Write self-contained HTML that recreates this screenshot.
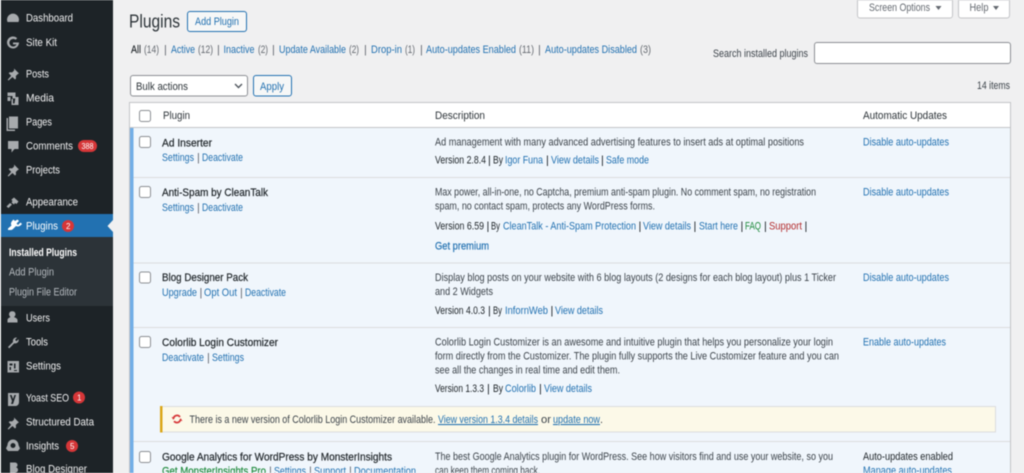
<!DOCTYPE html>
<html lang="en"><head><meta charset="utf-8"><title>Plugins</title>
<style>
html,body{margin:0;padding:0;width:1024px;height:473px;overflow:hidden;background:#f0f0f1}
svg{display:block;filter:blur(.4px)}
text{font-family:"Liberation Sans",sans-serif;font-size:10.8px;fill:#3c434a;white-space:pre;transform:translateY(-.5px)}
.m text{fill:#f0f0f1}
.s text{fill:#b4b9be}
.l{fill:#2271b1}
.g{fill:#646970}
.n{fill:#1d2327;stroke:#1d2327;stroke-width:.2px}
.k{fill:#1d2327}
.h{fill:#2c3338}
.i{fill:#a7aaad}
.c{fill:#fff;stroke:#8c8f94;stroke-width:1}
</style></head><body>
<svg width="1024" height="473" viewBox="0 0 1024 473" xmlns="http://www.w3.org/2000/svg">
<rect width="1024" height="473" fill="#f0f0f1"/>
<!-- sidebar -->
<rect x="1" width="112" height="473" fill="#1d2327"/>
<rect x="1" y="214" width="112" height="23" fill="#2271b1"/>
<rect x="1" y="237" width="112" height="69" fill="#2c3338"/>
<path d="M113 220l-5.500 6 5.500 6z" fill="#f0f0f1"/>
<g class="m">
<text x="26" y="22" textLength="47" lengthAdjust="spacingAndGlyphs">Dashboard</text>
<text x="26" y="46.500" textLength="31" lengthAdjust="spacingAndGlyphs">Site Kit</text>
<text x="26" y="78" textLength="23" lengthAdjust="spacingAndGlyphs">Posts</text>
<text x="26" y="102" textLength="28" lengthAdjust="spacingAndGlyphs">Media</text>
<text x="26" y="126" textLength="26" lengthAdjust="spacingAndGlyphs">Pages</text>
<text x="26" y="150" textLength="47" lengthAdjust="spacingAndGlyphs">Comments</text>
<text x="26" y="174" textLength="34" lengthAdjust="spacingAndGlyphs">Projects</text>
<text x="26" y="206" textLength="52" lengthAdjust="spacingAndGlyphs">Appearance</text>
<text x="26" y="230" textLength="32" lengthAdjust="spacingAndGlyphs" style="fill:#fff">Plugins</text>
<text x="26" y="322" textLength="24" lengthAdjust="spacingAndGlyphs">Users</text>
<text x="26" y="346" textLength="22" lengthAdjust="spacingAndGlyphs">Tools</text>
<text x="26" y="370" textLength="35" lengthAdjust="spacingAndGlyphs">Settings</text>
<text x="26" y="402" textLength="43" lengthAdjust="spacingAndGlyphs">Yoast SEO</text>
<text x="26" y="426" textLength="68" lengthAdjust="spacingAndGlyphs">Structured Data</text>
<text x="26" y="450" textLength="33" lengthAdjust="spacingAndGlyphs">Insights</text>
<text x="26" y="473" textLength="61" lengthAdjust="spacingAndGlyphs">Blog Designer</text>
</g>
<g class="s">
<text x="9" y="256.500" textLength="68" lengthAdjust="spacingAndGlyphs" style="fill:#fff;font-weight:bold">Installed Plugins</text>
<text x="9" y="276" textLength="45" lengthAdjust="spacingAndGlyphs">Add Plugin</text>
<text x="9" y="296" textLength="68" lengthAdjust="spacingAndGlyphs">Plugin File Editor</text>
</g>
<!-- sidebar icons -->
<g class="i">
<path d="M7.500 22a6 6 0 1 1 11 0z"/>
<path d="M13 42.500h6a6 6 0 1 1-1.800-4.300l-1.600 1.600a3.800 3.800 0 1 0 1 4.600H13z"/>
<path d="M14 68.500l5 5-1.200 .5-2 2 .2 2.500-1 1-2.500-2.500-4 3.500-.8-.8 3.500-4-2.500-2.500 1-1 2.500.2 2-2z"/>
<path d="M7.500 92.500h8v6h-3v-2.500h-5zM15.500 97h3v8h-7v-6h1.500v4.500h1.500zM7.500 97h3v4h-3z"/>
<path d="M9 116.500h9v12h-9z"/><path d="M8 118v11.500h7v1.500h-8.500v-13z"/>
<path d="M8 141h10.500v8h-4l-3 3.500v-3.500H8z"/>
<path d="M14 164.500l5 5-1.200 .5-2 2 .2 2.500-1 1-2.500-2.500-4 3.500-.8-.8 3.500-4-2.500-2.500 1-1 2.500.2 2-2z"/>
<path d="M14 197.500l4.500 4-2 2.500-1.500-1-1 1.500-2.500-2 1-1.500-1.200-1.200zM10 203l2 1.500-3.500 3.500-2-1.500z"/>
<path d="M7.500 322.500v-2.500c0-1.500 2-2.500 3-3-1-.8-1.500-1.800-1.500-3a3.300 3.300 0 0 1 6.500 0c0 1.200-.5 2.200-1.500 3 1 .5 3.500 1.500 3.500 3v2.500z"/>
<path d="M8 347l5-5c-.5-2 .5-4 3-4.500l1 .2-2 2 1.500 1.500 2-2 .2 1c-.3 2.500-2.500 3.500-4.500 3l-5 5.200z"/>
<path fill-rule="evenodd" d="M7.500 361h11.500v11.500H7.500zM9.500 363.500v2h3v-2zM14 363.500v5h1.500v-5zM9.500 367v3h1.500v-3zM14 370v1h3v-1z"/>
<path d="M8 393h11v9c0 2-1 3.500-3 4H8zM9.800 395l2.200 6-1 3h2l3-9h-1.600l-1.400 4-1.400-4z" fill-rule="evenodd"/>
<path d="M14 417.500l5 5-1.200 .5-2 2 .2 2.500-1 1-2.500-2.500-4 3.500-.8-.8 3.500-4-2.500-2.500 1-1 2.500.2 2-2z"/>
<path fill-rule="evenodd" d="M13 439.500c3.500 0 5.500 3 5.500 5.500l1.500 3.500-2 2.500H8l-2-2.500L7.500 445c0-2.500 2-5.500 5.500-5.500zM13 443a2.500 2.500 0 1 0 .01 0z"/>
<path d="M10 462.500h4.500c2 0 3 1 3 2.500 0 1-.5 1.800-1.500 2.200 1.300 .4 2 1.300 2 2.600 0 1.700-1.200 3.200-3.500 3.200H10z"/>
</g>
<path fill="#fff" d="M17.500 219.500l1.500 1.500-2.500 2.500 1.500 1.500 2.500-2.500 1.500 1.500-1 1c-1.500 1.500-3.500 2-5 1l-2.500 2.500c-.8 .8-1.500 1.500-2.500 1.500H8v-1.500l3.500-3c-1-1.500-.5-3.500 1-5l1-1 1.500 1.500z"/>
<!-- badges -->
<rect x="78" y="140" width="19" height="12" rx="6" fill="#d63638"/>
<text x="81.500" y="149.500" textLength="12" lengthAdjust="spacingAndGlyphs" style="font-size:8px;fill:#fff">388</text>
<circle cx="68" cy="226" r="6" fill="#d63638"/>
<text x="66" y="229.500" style="font-size:8px;fill:#fff">2</text>
<circle cx="79" cy="397.500" r="6" fill="#d63638"/>
<text x="77" y="401" style="font-size:8px;fill:#fff">1</text>
<circle cx="72" cy="446" r="6" fill="#d63638"/>
<text x="70" y="449.500" style="font-size:8px;fill:#fff">5</text>

<!-- header -->
<text x="129" y="28" textLength="51" lengthAdjust="spacingAndGlyphs" class="k" style="font-size:18px;fill:#2c3338">Plugins</text>
<rect x="187.500" y="11.500" width="59" height="20" rx="2.500" fill="#f6f7f7" stroke="#2271b1"/>
<text x="195" y="25.500" textLength="44" lengthAdjust="spacingAndGlyphs" class="l">Add Plugin</text>

<path d="M857.500 0v15.500a2.500 2.500 0 0 0 2.500 2.500h90a2.500 2.500 0 0 0 2.500-2.500V0z" fill="#fff" stroke="#c3c4c7"/>
<text x="869" y="11.500" textLength="61" lengthAdjust="spacingAndGlyphs" class="g">Screen Options</text>
<path d="M935.500 6h6l-3 4z" fill="#646970"/>
<path d="M958.500 0v15.500a2.500 2.500 0 0 0 2.500 2.500h46a2.500 2.500 0 0 0 2.500-2.500V0z" fill="#fff" stroke="#c3c4c7"/>
<text x="969.500" y="11.500" textLength="19" lengthAdjust="spacingAndGlyphs" class="g">Help</text>
<path d="M993 6h6l-3 4z" fill="#646970"/>

<!-- filters -->
<text x="131" y="53.500" textLength="10" lengthAdjust="spacingAndGlyphs" class="n">All</text>
<text x="144" y="53.500" textLength="15" lengthAdjust="spacingAndGlyphs" class="g">(14)</text>
<text x="164" y="53.500" class="g">|</text>
<text x="171" y="53.500" textLength="24" lengthAdjust="spacingAndGlyphs" class="l">Active</text>
<text x="198" y="53.500" textLength="15" lengthAdjust="spacingAndGlyphs" class="g">(12)</text>
<text x="217" y="53.500" class="g">|</text>
<text x="223.500" y="53.500" textLength="31" lengthAdjust="spacingAndGlyphs" class="l">Inactive</text>
<text x="258" y="53.500" textLength="10" lengthAdjust="spacingAndGlyphs" class="g">(2)</text>
<text x="272" y="53.500" class="g">|</text>
<text x="279" y="53.500" textLength="67" lengthAdjust="spacingAndGlyphs" class="l">Update Available</text>
<text x="349" y="53.500" textLength="10" lengthAdjust="spacingAndGlyphs" class="g">(2)</text>
<text x="364" y="53.500" class="g">|</text>
<text x="371" y="53.500" textLength="31" lengthAdjust="spacingAndGlyphs" class="l">Drop-in</text>
<text x="405" y="53.500" textLength="10" lengthAdjust="spacingAndGlyphs" class="g">(1)</text>
<text x="420" y="53.500" class="g">|</text>
<text x="426" y="53.500" textLength="90" lengthAdjust="spacingAndGlyphs" class="l">Auto-updates Enabled</text>
<text x="519" y="53.500" textLength="15" lengthAdjust="spacingAndGlyphs" class="g">(11)</text>
<text x="538" y="53.500" class="g">|</text>
<text x="545" y="53.500" textLength="92" lengthAdjust="spacingAndGlyphs" class="l">Auto-updates Disabled</text>
<text x="640" y="53.500" textLength="11" lengthAdjust="spacingAndGlyphs" class="g">(3)</text>

<text x="713" y="57.500" textLength="95" lengthAdjust="spacingAndGlyphs">Search installed plugins</text>
<rect x="814.500" y="42.500" width="196" height="21" rx="2.500" fill="#fff" stroke="#8c8f94"/>

<rect x="130.500" y="75.500" width="117" height="20.500" rx="2.500" fill="#fff" stroke="#8c8f94"/>
<text x="136" y="90.500" textLength="52" lengthAdjust="spacingAndGlyphs" class="h">Bulk actions</text>
<path d="M235 84l3.500 3.500 3.500-3.500" fill="none" stroke="#50575e" stroke-width="1.400"/>
<rect x="253.500" y="75.500" width="38" height="20.500" rx="2.500" fill="#f6f7f7" stroke="#2271b1"/>
<text x="260" y="90.500" textLength="24" lengthAdjust="spacingAndGlyphs" class="l">Apply</text>
<text x="977" y="89.500" textLength="33" lengthAdjust="spacingAndGlyphs">14 items</text>

<!-- table -->
<rect x="129.500" y="102.500" width="881" height="380" fill="#f0f6fc" stroke="#c3c4c7"/>
<rect x="130" y="103" width="880" height="24" fill="#fff"/>
<rect x="130" y="127" width="880" height="1" fill="#c3c4c7"/>
<rect x="130" y="128" width="3.500" height="345" fill="#72aee6"/>
<rect x="133.500" y="177" width="876.500" height="1" fill="#dcdcde"/>
<rect x="133.500" y="262.500" width="876.500" height="1" fill="#dcdcde"/>
<rect x="133.500" y="327" width="876.500" height="1" fill="#dcdcde"/>
<rect x="133.500" y="441" width="876.500" height="1" fill="#dcdcde"/>

<rect class="c" x="139.500" y="110.500" width="11" height="11" rx="2"/>
<text x="163" y="119.500" textLength="27" lengthAdjust="spacingAndGlyphs" class="h">Plugin</text>
<text x="435" y="119.500" textLength="50" lengthAdjust="spacingAndGlyphs" class="h">Description</text>
<text x="863" y="119.500" textLength="84" lengthAdjust="spacingAndGlyphs" class="h">Automatic Updates</text>

<!-- row 1 -->
<rect class="c" x="139.500" y="136.500" width="11" height="11" rx="2"/>
<text x="162" y="147" textLength="50" lengthAdjust="spacingAndGlyphs" class="n">Ad Inserter</text>
<text x="162" y="161.500" textLength="32" lengthAdjust="spacingAndGlyphs" class="l">Settings</text>
<text x="197" y="161.500" class="g">|</text>
<text x="202" y="161.500" textLength="41" lengthAdjust="spacingAndGlyphs" class="l">Deactivate</text>
<text x="435" y="146" textLength="369" lengthAdjust="spacingAndGlyphs">Ad management with many advanced advertising features to insert ads at optimal positions</text>
<text x="435" y="164" textLength="51" lengthAdjust="spacingAndGlyphs" class="k">Version 2.8.4</text>
<text x="488" y="164" class="k">|</text>
<text x="493" y="164" textLength="10" lengthAdjust="spacingAndGlyphs" class="k">By</text>
<text x="505" y="164" textLength="38" lengthAdjust="spacingAndGlyphs" class="l">Igor Funa</text>
<text x="546" y="164" class="k">|</text>
<text x="551" y="164" textLength="48" lengthAdjust="spacingAndGlyphs" class="l">View details</text>
<text x="601" y="164" class="k">|</text>
<text x="606" y="164" textLength="43" lengthAdjust="spacingAndGlyphs" class="l">Safe mode</text>
<text x="863" y="146" textLength="86" lengthAdjust="spacingAndGlyphs" class="l">Disable auto-updates</text>

<!-- row 2 -->
<rect class="c" x="139.500" y="186.500" width="11" height="11" rx="2"/>
<text x="162" y="196.500" textLength="106" lengthAdjust="spacingAndGlyphs" class="n">Anti-Spam by CleanTalk</text>
<text x="162" y="211.500" textLength="32" lengthAdjust="spacingAndGlyphs" class="l">Settings</text>
<text x="197" y="211.500" class="g">|</text>
<text x="202" y="211.500" textLength="41" lengthAdjust="spacingAndGlyphs" class="l">Deactivate</text>
<text x="435" y="196" textLength="381" lengthAdjust="spacingAndGlyphs">Max power, all-in-one, no Captcha, premium anti-spam plugin. No comment spam, no registration</text>
<text x="435" y="210" textLength="220" lengthAdjust="spacingAndGlyphs">spam, no contact spam, protects any WordPress forms.</text>
<text x="435" y="230" textLength="49" lengthAdjust="spacingAndGlyphs" class="k">Version 6.59</text>
<text x="486.500" y="230" class="k">|</text>
<text x="491" y="230" textLength="9" lengthAdjust="spacingAndGlyphs" class="k">By</text>
<text x="503" y="230" textLength="133" lengthAdjust="spacingAndGlyphs" class="l">CleanTalk - Anti-Spam Protection</text>
<text x="638.500" y="230" class="k">|</text>
<text x="643" y="230" textLength="48" lengthAdjust="spacingAndGlyphs" class="l">View details</text>
<text x="693.500" y="230" class="k">|</text>
<text x="699" y="230" textLength="39" lengthAdjust="spacingAndGlyphs" class="l">Start here</text>
<text x="740.500" y="230" class="k">|</text>
<text x="745" y="230" textLength="16" lengthAdjust="spacingAndGlyphs" style="fill:#1e8a3c">FAQ</text>
<text x="764" y="230" class="k">|</text>
<text x="769" y="230" textLength="33" lengthAdjust="spacingAndGlyphs" style="fill:#b32d2e">Support</text>
<text x="804.500" y="230" class="k">|</text>
<text x="435" y="250" textLength="54" lengthAdjust="spacingAndGlyphs" class="l" style="stroke:#2271b1;stroke-width:.2px">Get premium</text>
<text x="863" y="196" textLength="86" lengthAdjust="spacingAndGlyphs" class="l">Disable auto-updates</text>

<!-- row 3 -->
<rect class="c" x="139.500" y="272" width="11" height="11" rx="2"/>
<text x="162" y="281.500" textLength="86" lengthAdjust="spacingAndGlyphs" class="n">Blog Designer Pack</text>
<text x="162" y="296.500" textLength="35" lengthAdjust="spacingAndGlyphs" class="l">Upgrade</text>
<text x="199.500" y="296.500" class="g">|</text>
<text x="204" y="296.500" textLength="33" lengthAdjust="spacingAndGlyphs" class="l">Opt Out</text>
<text x="240" y="296.500" class="g">|</text>
<text x="245" y="296.500" textLength="41" lengthAdjust="spacingAndGlyphs" class="l">Deactivate</text>
<text x="435" y="281.500" textLength="401" lengthAdjust="spacingAndGlyphs">Display blog posts on your website with 6 blog layouts (2 designs for each blog layout) plus 1 Ticker</text>
<text x="435" y="295.500" textLength="58" lengthAdjust="spacingAndGlyphs">and 2 Widgets</text>
<text x="435" y="314.500" textLength="50" lengthAdjust="spacingAndGlyphs" class="k">Version 4.0.3</text>
<text x="488" y="314.500" class="k">|</text>
<text x="493" y="314.500" textLength="9" lengthAdjust="spacingAndGlyphs" class="k">By</text>
<text x="505" y="314.500" textLength="43" lengthAdjust="spacingAndGlyphs" class="l">InfornWeb</text>
<text x="550.500" y="314.500" class="k">|</text>
<text x="555" y="314.500" textLength="48" lengthAdjust="spacingAndGlyphs" class="l">View details</text>
<text x="863" y="281.500" textLength="86" lengthAdjust="spacingAndGlyphs" class="l">Disable auto-updates</text>

<!-- row 4 -->
<rect class="c" x="139.500" y="336.500" width="11" height="11" rx="2"/>
<text x="162" y="346.500" textLength="116" lengthAdjust="spacingAndGlyphs" class="n">Colorlib Login Customizer</text>
<text x="162" y="361.500" textLength="42" lengthAdjust="spacingAndGlyphs" class="l">Deactivate</text>
<text x="207" y="361.500" class="g">|</text>
<text x="212" y="361.500" textLength="32" lengthAdjust="spacingAndGlyphs" class="l">Settings</text>
<text x="435" y="346" textLength="398" lengthAdjust="spacingAndGlyphs">Colorlib Login Customizer is an awesome and intuitive plugin that helps you personalize your login</text>
<text x="435" y="360" textLength="404" lengthAdjust="spacingAndGlyphs">form directly from the Customizer. The plugin fully supports the Live Customizer feature and you can</text>
<text x="435" y="374" textLength="185" lengthAdjust="spacingAndGlyphs">see all the changes in real time and edit them.</text>
<text x="435" y="392.500" textLength="49" lengthAdjust="spacingAndGlyphs" class="k">Version 1.3.3</text>
<text x="487" y="392.500" class="k">|</text>
<text x="493" y="392.500" textLength="10" lengthAdjust="spacingAndGlyphs" class="k">By</text>
<text x="505" y="392.500" textLength="31" lengthAdjust="spacingAndGlyphs" class="l">Colorlib</text>
<text x="539" y="392.500" class="k">|</text>
<text x="544" y="392.500" textLength="48" lengthAdjust="spacingAndGlyphs" class="l">View details</text>
<text x="863" y="346" textLength="83" lengthAdjust="spacingAndGlyphs" class="l">Enable auto-updates</text>

<!-- notice -->
<rect x="160.500" y="406.500" width="835" height="25.500" fill="#fcf9e8" stroke="#dcdcde"/>
<rect x="160" y="406" width="2.500" height="26.500" fill="#dba617"/>
<circle cx="177" cy="419" r="3.600" fill="none" stroke="#d63638" stroke-width="1.800" stroke-dasharray="9 2.300"/>
<path d="M171.500 417l2.500 .5-.5 2.500zM182.500 421l-2.500-.5.5-2.500z" fill="#d63638"/>
<text x="189.500" y="423.500" textLength="246" lengthAdjust="spacingAndGlyphs">There is a new version of Colorlib Login Customizer available.</text>
<text x="438" y="423.500" textLength="100" lengthAdjust="spacingAndGlyphs" class="l" text-decoration="underline">View version 1.3.4 details</text>
<text x="541" y="423.500" textLength="10" lengthAdjust="spacingAndGlyphs">or</text>
<text x="553" y="423.500" textLength="47" lengthAdjust="spacingAndGlyphs" class="l" text-decoration="underline">update now</text>
<text x="600" y="423.500">.</text>

<!-- row 5 -->
<rect class="c" x="139.500" y="451.500" width="11" height="11" rx="2"/>
<text x="162" y="461" textLength="230" lengthAdjust="spacingAndGlyphs" class="n">Google Analytics for WordPress by MonsterInsights</text>
<text x="162" y="475" textLength="104" lengthAdjust="spacingAndGlyphs" style="fill:#1e8a3c;stroke:#1e8a3c;stroke-width:.2px">Get MonsterInsights Pro</text>
<text x="269" y="475" class="g">|</text>
<text x="274" y="475" textLength="32" lengthAdjust="spacingAndGlyphs" class="l">Settings</text>
<text x="309" y="475" class="g">|</text>
<text x="314" y="475" textLength="32" lengthAdjust="spacingAndGlyphs" class="l">Support</text>
<text x="349" y="475" class="g">|</text>
<text x="354" y="475" textLength="62" lengthAdjust="spacingAndGlyphs" class="l">Documentation</text>
<text x="435" y="460.500" textLength="398" lengthAdjust="spacingAndGlyphs">The best Google Analytics plugin for WordPress. See how visitors find and use your website, so you</text>
<text x="435" y="474.500" textLength="105" lengthAdjust="spacingAndGlyphs">can keep them coming back.</text>
<text x="863" y="460.500" textLength="90" lengthAdjust="spacingAndGlyphs" class="k">Auto-updates enabled</text>
<text x="863" y="474.500" textLength="89" lengthAdjust="spacingAndGlyphs" class="l">Manage auto-updates</text>
</svg>
</body></html>
